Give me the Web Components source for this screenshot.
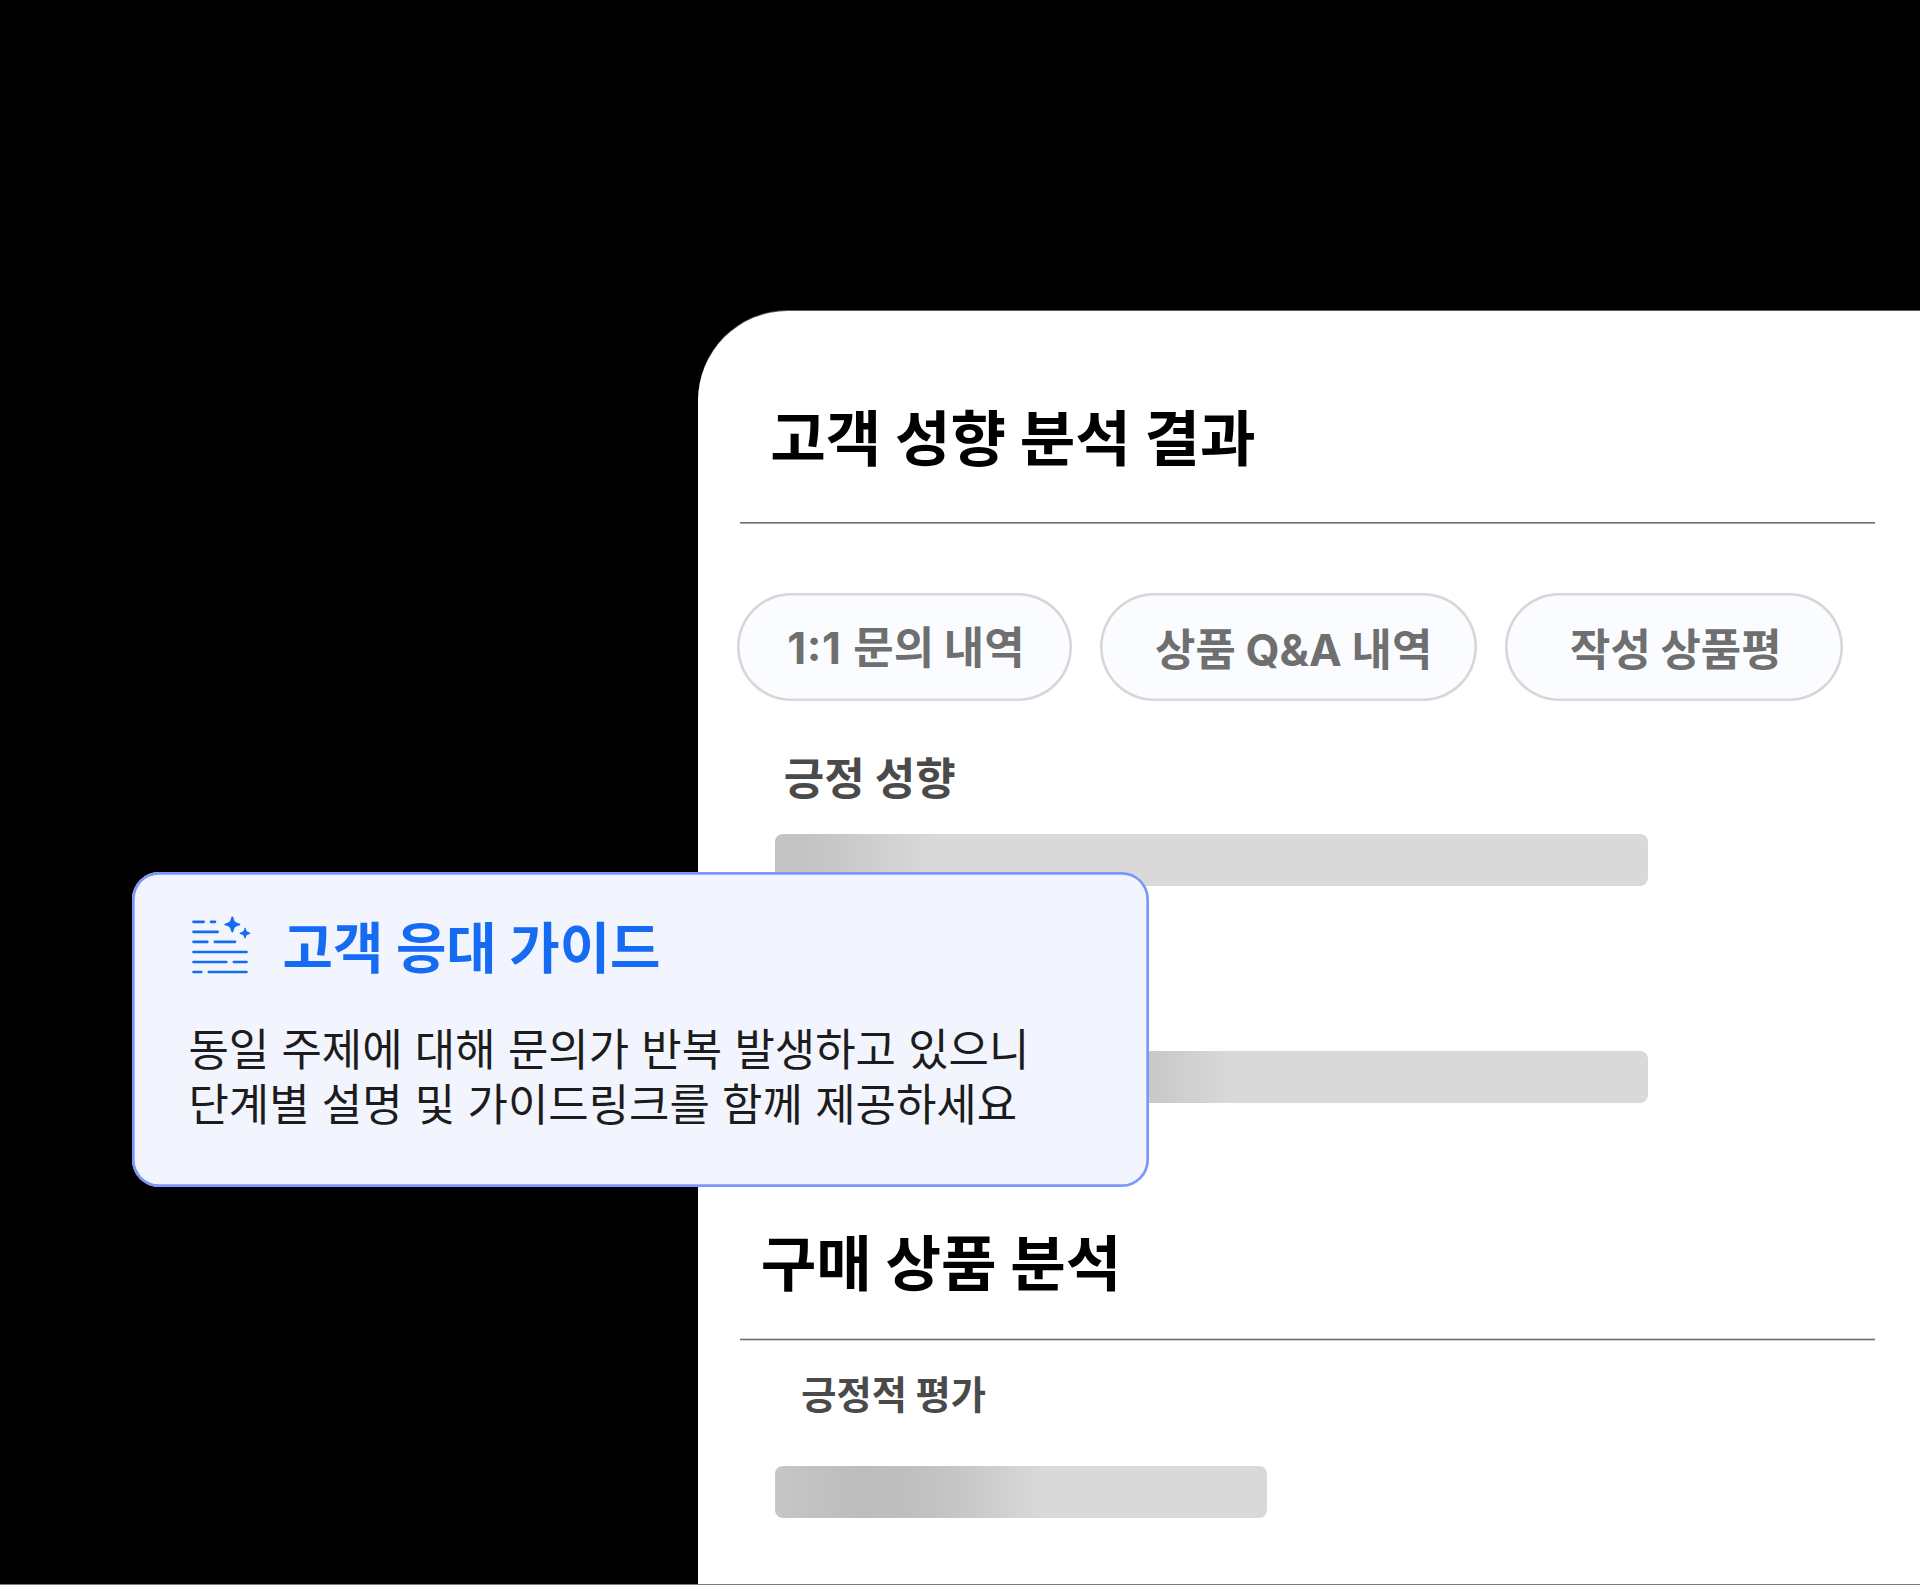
<!DOCTYPE html>
<html lang="ko">
<head>
<meta charset="utf-8">
<title>고객 성향 분석 결과</title>
<style>
  :root {
    --font: "Noto Sans CJK KR", sans-serif;
    --font-latin: Inter, "Noto Sans CJK KR", sans-serif;
    --brand: #156cf2;
    --guide-bg: #f2f4fe;
    --guide-line: #7c97fb;
    --chip-bg: #fbfcff;
    --chip-line: #d7d7d7;
    --chip-ink: #6f6f6f;
    --bar: #d9d9d9;
  }
  body { margin: 0; background: #000; font-family: var(--font); }
  .latin { font-family: var(--font-latin); }
  .ratio { letter-spacing: 0.6px; margin-right: 2px; }
  .colon { vertical-align: 3px; line-height: 1; }
</style>
</head>
<body>
<app-stage>
  <result-panel>
    <section-title style="padding-left: 72.3px">고객 성향 분석 결과</section-title>
    <rule-line offset="0" style="margin-top: 57px"></rule-line>
    <chip-row>
      <chip-pill style="width: 335px; padding: 22px 0 0 50.3px"><span class="latin ratio">1<span class="colon">:</span>1</span> 문의 내역</chip-pill>
      <chip-pill style="width: 377px; padding: 24px 0 0 55px">상품 <span class="latin">Q&amp;A</span> 내역</chip-pill>
      <chip-pill style="width: 338px; padding: 24px 0 0 65px">작성 상품평</chip-pill>
    </chip-row>
    <sub-title style="margin-top: 45px; padding-left: 85.7px">긍정 성향</sub-title>
    <skeleton-bar style="margin-top: 28px; --fill: linear-gradient(90deg, #c3c3c3, #c5c5c5 5%, #d9d9d9 18%)"></skeleton-bar>
    <skeleton-bar style="margin-top: 165px; --fill: linear-gradient(90deg, #c6c6c6, #bdbdbd 21%, #c6c6c6 40%, #cacaca 44%, #d9d9d9 52.5%)"></skeleton-bar>
    <section-title style="margin-top: 126px; padding-left: 62.7px">구매 상품 분석</section-title>
    <rule-line offset="0.7" style="margin-top: 48px"></rule-line>
    <sub-title small style="margin-top: 24px; padding-left: 103.2px">긍정적 평가</sub-title>
    <skeleton-bar style="margin-top: 46px; width: 492px; --fill: linear-gradient(90deg, #c6c6c6, #bdbdbd 17%, #bebebe 24%, #c3c3c3 33%, #cacaca 41%, #d9d9d9 54%)"></skeleton-bar>
  </result-panel>

  <guide-card slot="overlay">
    <guide-icon slot="icon"></guide-icon>
    <span slot="title">고객 응대 가이드</span>
    동일 주제에 대해 문의가 반복 발생하고 있으니<br>단계별 설명 및 가이드링크를 함께 제공하세요
  </guide-card>
</app-stage>

<script>
// Small helper: every element here is just markup + styles in an open shadow root.
function define(name, html) {
  customElements.define(name, class extends HTMLElement {
    connectedCallback() {
      if (this.shadowRoot) return;
      this.attachShadow({ mode: "open" }).innerHTML =
        typeof html === "function" ? html(this) : html;
    }
  });
}

define("app-stage", `
  <style>
    :host {
      display: block; position: relative; box-sizing: border-box;
      width: 1920px; height: 1585px; overflow: hidden;
      background: #000; border-bottom: 1px solid #7a7a7a;
    }
    .content { display: flex; flex-direction: column; padding: 311px 0 0 698px; }
  </style>
  <div class="content"><slot></slot></div>
  <slot name="overlay"></slot>
`);

define("result-panel", `
  <style>
    :host {
      display: flex; flex-direction: column; box-sizing: border-box;
      height: 1274px; padding-top: 93px;
      background: #fff; border-top-left-radius: 90px;
      box-shadow: 0 -1px 0 rgba(255, 255, 255, 0.35);
    }
  </style>
  <slot></slot>
`);

define("section-title", `
  <style>
    :host {
      display: block; color: #000; white-space: nowrap; word-spacing: -3.3px;
      font-size: 60.4px; font-weight: 700; line-height: 61px;
    }
  </style>
  <slot></slot>
`);

define("sub-title", `
  <style>
    :host {
      display: block; color: #4a4a4a; white-space: nowrap; word-spacing: -0.052em;
      font-size: 44px; font-weight: 700; line-height: 60px;
    }
    :host([small]) { font-size: 38.3px; line-height: 55px; }
  </style>
  <slot></slot>
`);

// 1.6px hairline; offset shifts it inside its 3px box
define("rule-line", (el) => `
  <style>
    :host { display: block; height: 3px; margin-left: 42px; width: 1135px; }
    svg { display: block; }
  </style>
  <svg width="1135" height="3" aria-hidden="true">
    <rect x="0" y="${el.getAttribute("offset")}" width="1135" height="1.6" fill="#6e6e6e"/>
  </svg>
`);

define("chip-row", `
  <style>
    :host { display: flex; gap: 28px; margin: 68px 0 0 39px; }
  </style>
  <slot></slot>
`);

define("chip-pill", `
  <style>
    :host {
      display: block; box-sizing: border-box; flex: none; height: 108px;
      border-radius: 54px; background: var(--chip-bg);
      box-shadow: inset 0 0 0 2.6px var(--chip-line);
      color: var(--chip-ink); white-space: nowrap; word-spacing: -2.6px;
      font-size: 43.9px; font-weight: 700; line-height: 60px;
    }
  </style>
  <slot></slot>
`);

define("skeleton-bar", `
  <style>
    :host {
      display: block; flex: none; width: 873px; height: 52px; margin-left: 77px;
      border-radius: 8px; background: var(--fill, var(--bar));
    }
  </style>
`);

define("guide-card", `
  <style>
    :host {
      position: absolute; left: 132px; top: 872px; box-sizing: border-box;
      display: flex; flex-direction: column; gap: 45px;
      width: 1017px; height: 315px; padding: 42px 0 0 56.4px;
      border-radius: 27px; background: var(--guide-bg);
      box-shadow: inset 0 0 0 2.7px var(--guide-line);
    }
    .head { display: flex; gap: 28.6px; height: 61px; padding-left: 1.6px; }
    .title {
      color: var(--brand); white-space: nowrap; word-spacing: -2.85px;
      font-size: 54.8px; font-weight: 700; line-height: 60px;
    }
    .text {
      color: #1c1c1c; white-space: nowrap;
      font-size: 43.9px; font-weight: 400; line-height: 55px;
    }
  </style>
  <div class="head">
    <slot name="icon"></slot>
    <div class="title"><slot name="title"></slot></div>
  </div>
  <div class="text"><slot></slot></div>
`);

// Text lines with two sparkles
define("guide-icon", `
  <style>
    :host { display: block; width: 64px; height: 60px; margin-top: 1px; color: var(--brand); }
    svg { display: block; }
  </style>
  <svg width="64" height="60" viewBox="60 45 192 180" aria-hidden="true">
    <path fill="none" stroke="currentColor" stroke-width="8" stroke-linecap="round"
      d="M70.500 65.500H101M123 65.500H135M70.500 95.500H143M70.500 125.500H112M134.500 125.500H195M70.500 156H229.500
         M70.500 186H169M191.500 186H229.500M70.500 216H94M116.500 216H229.500"/>
    <path fill="currentColor"
      d="M187 49.500c2 0 3 2 4 6 2.500 9 5 11.500 14 14 4 1 6 2 6 4s-2 3-6 4c-9 2.500-11.500 5-14 14-1 4-2 6-4 6s-3-2-4-6c-2.500-9-5-11.500-14-14-4-1-6-2-6-4s2-3 6-4c9-2.500 11.500-5 14-14 1-4 2-6 4-6z"/>
    <path fill="currentColor"
      d="M225 83.500c1.500 0 2 1.500 2.500 4 1.500 6 3 7.500 9.500 9 2.500.6 4 1.500 4 3s-1.500 2.400-4 3c-6.500 1.500-8 3-9.500 9-.5 2.500-1 4-2.500 4s-2-1.500-2.500-4c-1.500-6-3-7.500-9.500-9-2.500-.6-4-1.500-4-3s1.500-2.400 4-3c6.500-1.500 8-3 9.500-9 .5-2.500 1-4 2.500-4z"/>
  </svg>
`);
</script>
</body>
</html>
